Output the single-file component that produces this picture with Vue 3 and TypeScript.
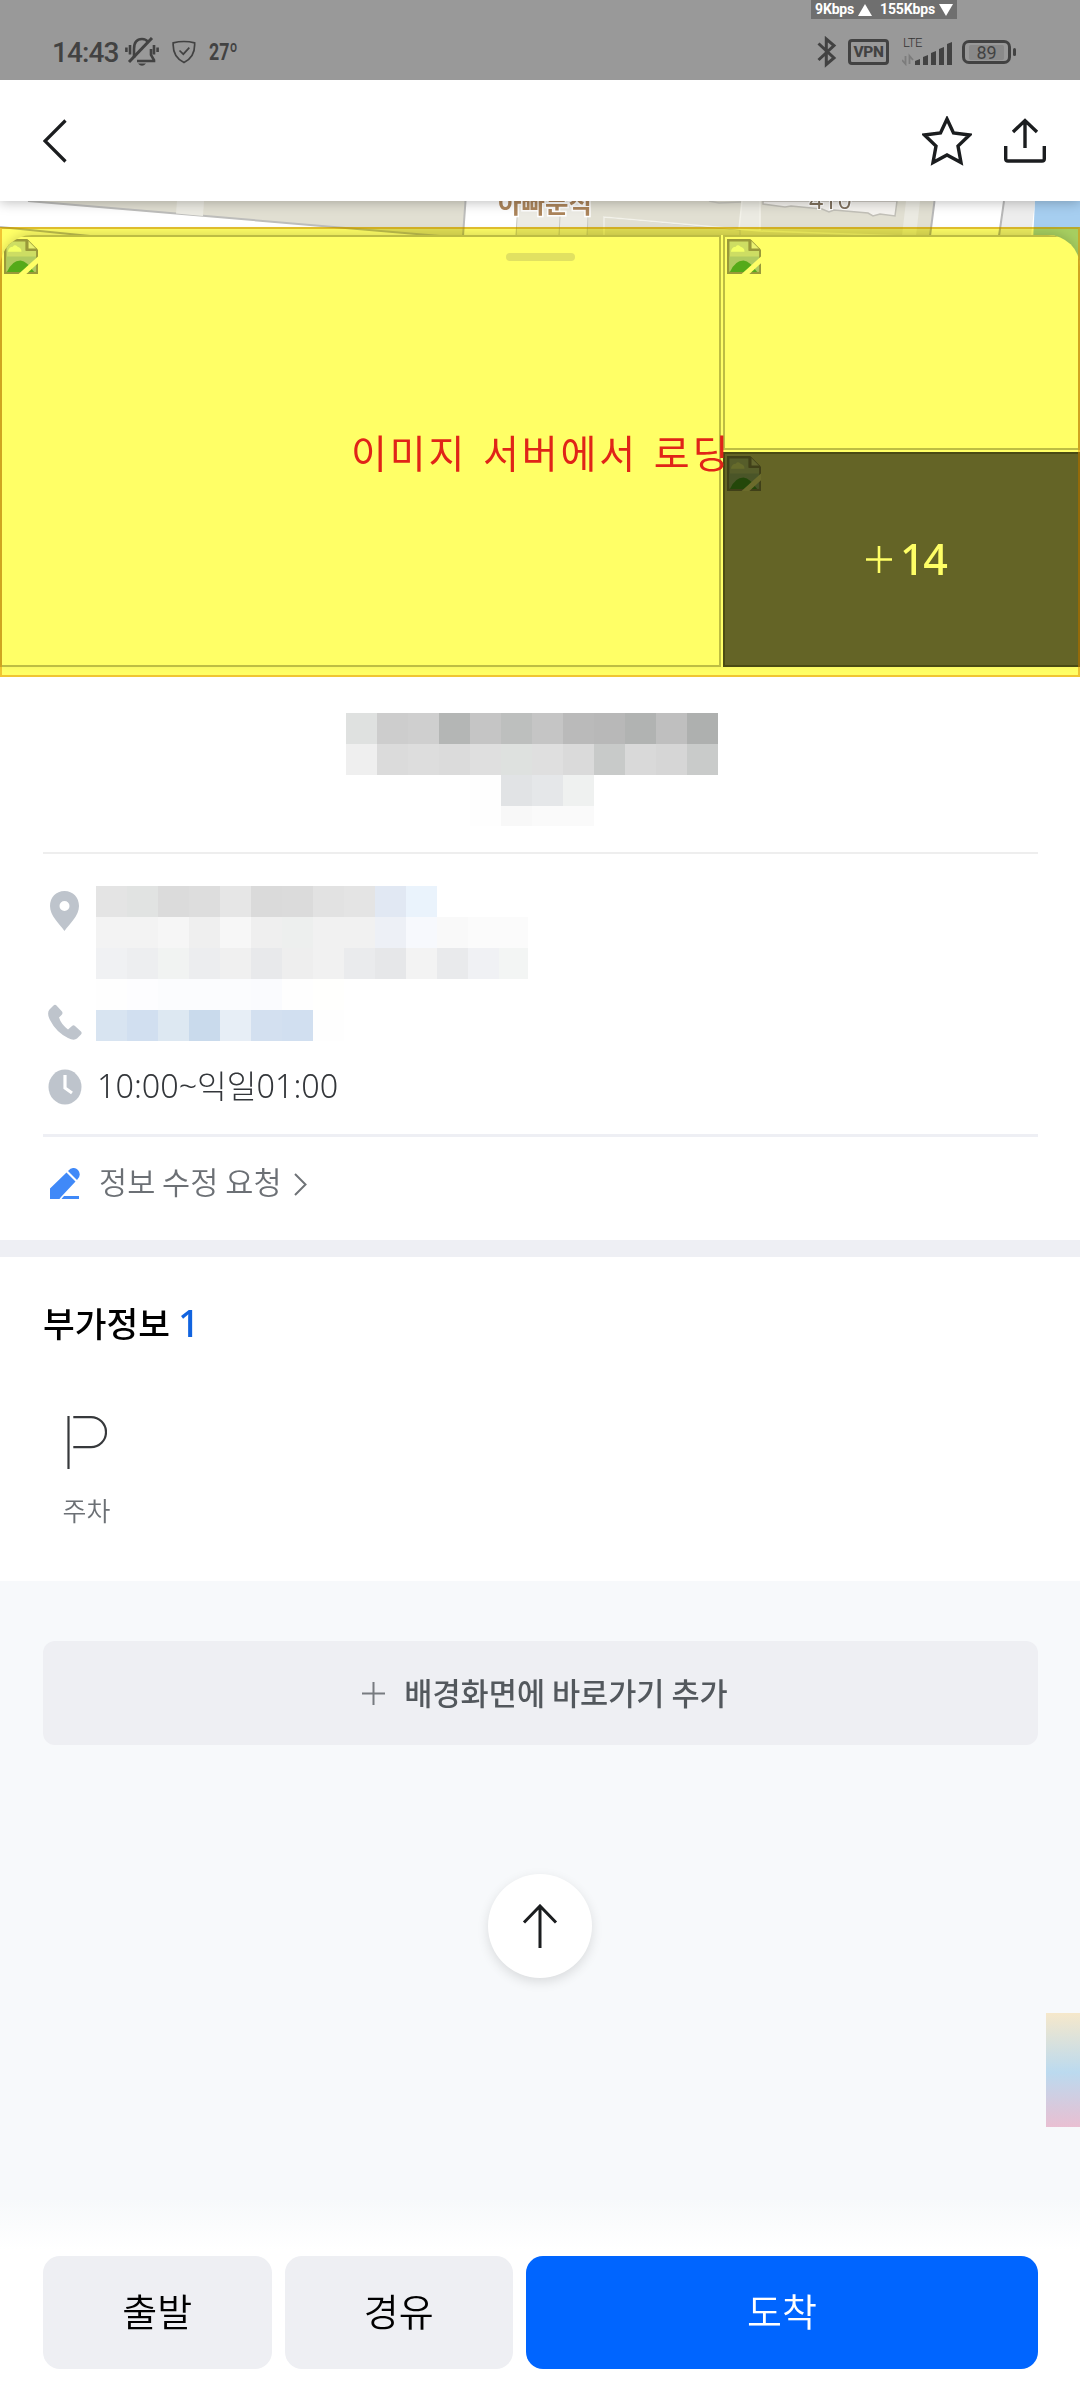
<script setup lang="ts">
interface MosaicRow { height: number; cells: string[] }

const titleMosaic: MosaicRow[] = [
  { height: 31, cells: ['#dfe1e0', '#cdcdcd', '#cfcfcf', '#b4b6b5', '#c5c5c5', '#bdbfbe', '#c5c5c5', '#bababa', '#b8b8b8', '#b1b3b2', '#bfbfbf', '#aeb0af'] },
  { height: 31, cells: ['#efefef', '#dbdbdb', '#dddddd', '#dbdbdb', '#dfdfdf', '#dee1df', '#dfdfdf', '#dadada', '#c8cac9', '#d9d9d9', '#d6d6d6', '#c9cbca'] },
  { height: 31, cells: ['#fff', '#fff', '#fff', '#fff', '#fefefe', '#e1e3e5', '#e5e7e9', '#eff1f0', '#fff', '#fff', '#fff', '#fff'] },
  { height: 20, cells: ['#fff', '#fff', '#fff', '#fff', '#fefefe', '#f8f8f8', '#fafafa', '#fafafa', '#fff', '#fff', '#fff', '#fff'] },
]

const infoMosaic: MosaicRow[] = [
  { height: 31, cells: ['#e4e4e4', '#e1e3e2', '#dbdbdb', '#dddddd', '#e6e6e6', '#dadada', '#dbdbdb', '#e2e2e2', '#e4e4e4', '#e1e8f3', '#eaf3fc', '#fff', '#fff', '#fff'] },
  { height: 31, cells: ['#f3f3f3', '#f3f3f3', '#f6f6f6', '#efefef', '#f7f7f7', '#efefef', '#edefee', '#f1f1f1', '#f1f1f1', '#edf0f6', '#f7f9fd', '#f9f9f9', '#fbfbfb', '#fbfbfb'] },
  { height: 31, cells: ['#f0f1f3', '#edeef0', '#f1f3f2', '#ecedef', '#f0f0f0', '#e8e9eb', '#eeeeee', '#f1f1f1', '#eaebed', '#e6e7e9', '#f3f3f3', '#e9eaec', '#f0f1f4', '#f3f5f4'] },
  { height: 31, cells: ['#fefefe', '#fdfdff', '#fbfcfe', '#fbfcfe', '#fbfcfe', '#fafbfe', '#fefefe', '#fffffd', '#fff', '#fff', '#fff', '#fff', '#fff', '#fff'] },
  { height: 31, cells: ['#d8e4f1', '#d1dff0', '#dde8f2', '#c9daec', '#e7eef6', '#d3e0f0', '#d1dff0', '#fefefe', '#fff', '#fff', '#fff', '#fff', '#fff', '#fff'] },
]

const bars = [
  { x: 0, h: 6 }, { x: 8, h: 10 }, { x: 16, h: 14 }, { x: 24, h: 18 }, { x: 32, h: 23 },
]
</script>

<template>
  <div class="screen">
    <div class="status">
      <span class="clock">14:43</span>
      <svg class="bell" width="34" height="30" viewBox="0 0 34 30" fill="none" stroke="#424242" stroke-width="2.6">
        <path d="M9 21V12Q9 2 17 2Q21 2 23 5M26 12V18L29 23V24H12M1.4 10.500V15M5 8V17.500M29 8V17.500M32.600 10.500V15" />
        <path d="M4 25L27 1" stroke-width="3" />
        <path d="M13 26.600H21Q17 31 13 26.600Z" fill="#424242" stroke="none" />
      </svg>
      <svg class="shield" width="24" height="24" viewBox="0 0 24 24" fill="none" stroke="#424242" stroke-width="1.7">
        <path d="M1.200 2.800Q12 .2 22.600 2.800Q23.500 17 12 22.500Q.3 17 1.200 2.800Z" />
        <path d="M7.500 10.500L11.300 14.200L17.300 7.700" />
      </svg>
      <span class="temp">27º</span>
      <div class="status-right">
        <svg width="20" height="32" viewBox="0 0 20 32" fill="none" stroke="#424242" stroke-width="3">
          <path d="M1.500 7.500L17 22L9.300 28.500V3L17 9.500L1.500 24" />
        </svg>
        <span class="vpn">VPN</span>
        <div class="signal">
          <span class="lte">LTE</span>
          <svg width="50" height="28" viewBox="0 0 50 28">
            <path d="M3.500 18V26L0 22M7.500 26V18L11 22" fill="none" stroke="#7c7c7c" stroke-width="1.800" />
            <path v-for="b in bars" :key="b.x" :d="`M${b.x + 13} ${27 - b.h + 2}L${b.x + 18} ${27 - b.h}V27H${b.x + 13}Z`" fill="#424242" />
          </svg>
        </div>
        <div class="battery"><span>89</span></div>
      </div>
      <div class="netspeed">
        <span>9Kbps</span>
        <svg width="14" height="12" viewBox="0 0 14 12"><path d="M7 0L14 12H0Z" fill="#fff" /></svg>
        <span class="down">155Kbps</span>
        <svg width="14" height="12" viewBox="0 0 14 12"><path d="M7 12L14 0H0Z" fill="#fff" /></svg>
      </div>
    </div>

    <header class="header">
      <svg width="24" height="44" viewBox="0 0 24 44" fill="none" stroke="#1b1d1f" stroke-width="3.200"><path d="M22.500 1.500L2 22L22.500 42.500" /></svg>
      <div class="header-actions">
        <svg width="50" height="50" viewBox="0 0 50 50" fill="none" stroke="#1b1d1f" stroke-width="3.400">
          <path d="M25 3L31.500 17L47.500 19L36 30L39 46.500L25 39L11 46.500L14 30L2.500 19L18.500 17Z" />
        </svg>
        <svg width="42" height="45" viewBox="0 0 42 45" fill="none" stroke="#1b1d1f" stroke-width="3.400">
          <path d="M21 30V2.500M9 14L21 2.500L33 14M1.700 28V41Q1.700 43 4 43H38Q40.300 43 40.300 41V28" />
        </svg>
      </div>
    </header>

    <section class="hero">
      <svg class="map" width="1080" height="80" viewBox="0 0 1080 80">
        <rect width="1080" height="80" fill="#fff" />
        <path d="M28 0L440 35H463L465 0Z" fill="#e1dfd2" />
        <path d="M28 0L440 35M465.500 0L463 35M0 26L90 35" fill="none" stroke="#bdbdbb" stroke-width="2" />
        <path d="M177 0L176 12.500L203 15L204 0Z" fill="#ebeae2" />
        <path d="M518 0L516 35H933L937 0Z" fill="#e1dfd2" />
        <path d="M518 0L516 35H587L590 0Z" fill="#ecebe4" />
        <path d="M518 0L516 35M588 15L587 35M604 35V16L740 29V35M560 15L559 35" fill="none" stroke="#c8c8c0" stroke-width="1" />
        <path d="M742 0L739 28L760 30V0Z" fill="#ebeae2" />
        <path d="M604 35V16L738 28L760 30L904 35M742 0L739 28M760 0V30" fill="none" stroke="#f3f2ea" stroke-width="1.500" />
        <path d="M709 0L719 2L741 1" fill="none" stroke="#c8c7bf" stroke-width="1.500" />
        <path d="M763 0V3L785 6L791 5L822 8L829 11L834 9L868 12L873 15L880 13L895 15L897 0Z" fill="#f5f3ef" stroke="#c2c0b8" stroke-width="1.500" />
        <path d="M906 0L902 35H916L920 0Z" fill="#ebeae2" />
        <path d="M934 0L930 35H1000L1004 0Z" fill="#fff" />
        <path d="M1004 0L999 35H1031L1035 0Z" fill="#ededed" />
        <path d="M934.500 0L930 35M1004 0L999 35" stroke="#b8b8b8" stroke-width="2" />
        <path d="M1035 0L1031 80H1080V0Z" fill="#a6cef0" />
        <text class="map-name" x="498" y="12">아빠분식</text>
        <text class="map-number" x="809" y="7.500">410</text>
      </svg>
      <div class="loading">
        <i class="tint"></i>
        <div class="gallery">
          <div v-for="n in 3" :key="n" class="photo" :class="'photo-' + n">
            <svg class="broken" width="34" height="35" viewBox="0 0 35 36">
              <path d="M0 0H24L35 11V36H0Z" fill="#99993a" />
              <path d="M2.500 2.500H22V12H33V33.500H2.500Z" fill="#cddd63" />
              <path d="M2.500 18H33V33.500H2.500Z" fill="#b0cb60" />
              <path d="M4 13Q5 8 9 8Q11 5 14 8Q18 9 18 13Z" fill="#f2ff66" />
              <path d="M3 34Q8 22 17 22Q24 23 31 34Z" fill="#55aa19" />
              <path d="M15 36L35 18V25L23 36Z" fill="#ffff66" />
              <path d="M24 1V11H34" fill="#ebf271" stroke="#99993a" stroke-width="2.500" />
            </svg>
            <div v-if="n === 3" class="more">
              <svg width="26" height="27" viewBox="0 0 26 27" stroke="#ffff66" stroke-width="2.600"><path d="M0 13.500H26M13 0V27" /></svg>
              <span>14</span>
            </div>
          </div>
        </div>
        <i class="handle"></i>
        <p class="notice">이미지 서버에서 로딩</p>
      </div>
    </section>

    <section class="info">
      <div class="title mosaic">
        <div v-for="(row, r) in titleMosaic" :key="r" class="mrow" :style="{ height: row.height + 'px' }">
          <i v-for="(c, k) in row.cells" :key="k" :style="{ background: c }"></i>
        </div>
      </div>
      <hr class="thin" />
      <div class="contact">
        <div class="icons">
          <svg width="29" height="40" viewBox="0 0 29 40"><path fill-rule="evenodd" d="M14.500 0C23 0 29 6.500 29 15C29 25 20 32 14.500 40C9 32 0 25 0 15C0 6.500 6 0 14.500 0ZM14.500 10A5 5 0 1 0 14.500 20A5 5 0 1 0 14.500 10Z" fill="#bec4cc" /></svg>
          <svg class="phone" width="34" height="36" viewBox="0 0 34 36"><path d="M5.500 1.500Q7 0 8.500 1.500L14 7.500Q15 9 14 10.500L11 13.500Q13 20 20 25.500L24 22Q25.500 20.500 27 22L33 27.500Q34.300 29 33 30.500L29 34.500Q26 37 20 34Q8 28 2 16Q-1.500 9 1.500 5.500Z" fill="#bec4cc" /></svg>
        </div>
        <div class="mosaic address">
          <div v-for="(row, r) in infoMosaic" :key="r" class="mrow" :style="{ height: row.height + 'px' }">
            <i v-for="(c, k) in row.cells" :key="k" :style="{ background: c }"></i>
          </div>
        </div>
      </div>
      <div class="hours">
        <svg width="34" height="36" viewBox="0 0 34 36"><ellipse cx="17" cy="18" rx="16.500" ry="17.500" fill="#bec4cc" /><path d="M17 6V19L24 24" fill="none" stroke="#fff" stroke-width="3.200" /></svg>
        <span>10:00~익일01:00</span>
      </div>
      <hr class="thick" />
      <div class="edit">
        <svg width="30" height="31" viewBox="0 0 30 31"><path d="M0 20.500L16.500 4.500L25.500 13.500L11 29L9.500 31H0ZM18 3Q23-2.500 28 2Q32 7 27 12Z" fill="#4089f8" /><path d="M14 28H29V31H11.500Z" fill="#4089f8" /></svg>
        <span>정보 수정 요청</span>
        <svg class="chev" width="13" height="23" viewBox="0 0 13 23" fill="none" stroke="#6f7377" stroke-width="2"><path d="M1 1L11.500 11.500L1 22" /></svg>
      </div>
    </section>

    <section class="extra">
      <h2>부가정보<b>1</b></h2>
      <div class="facility">
        <svg width="40" height="53" viewBox="0 0 40 53" fill="none" stroke="#37393c" stroke-width="2.200"><path d="M1.500 0V53M6.300 1.200H24A15 15 0 0 1 24 31.200H6.300" /></svg>
        <span>주차</span>
      </div>
    </section>

    <section class="tail">
      <div class="shortcut">
        <svg width="23" height="23" viewBox="0 0 23 23" stroke="#777b80" stroke-width="2"><path d="M0 11.500H23M11.500 0V23" /></svg>
        <span>배경화면에 바로가기 추가</span>
      </div>
      <div class="to-top">
        <svg width="36" height="44" viewBox="0 0 36 44" fill="none" stroke="#1b1d1f" stroke-width="3"><path d="M18 44V2M2 18.500L18 2L34 18.500" /></svg>
      </div>
      <i class="edge"></i>
    </section>

    <footer class="actions">
      <div class="btn"><span>출발</span></div>
      <div class="btn"><span>경유</span></div>
      <div class="btn primary"><span>도착</span></div>
    </footer>
  </div>
</template>

<style>
body { margin: 0; background: #fff; }
</style>

<style scoped>
* { box-sizing: border-box; }
svg { display: block; flex: none; }
.screen {
  width: 1080px; height: 2400px; overflow: hidden; position: relative; background: #fff;
  display: flex; flex-direction: column;
  font-family: "Noto Sans CJK KR", "Noto Sans", sans-serif;
}
.status {
  flex: none; height: 80px; background: #999; position: relative; z-index: 4; display: flex; align-items: center;
  padding: 24px 69px 0 52px; font-family: Roboto, sans-serif; color: #424242;
}
.clock { font-size: 28px; font-weight: 500; width: 73px; letter-spacing: -.9px; white-space: nowrap; }
.shield { margin-left: 13px; }
.temp { width: 40px; margin-left: 13px; font-size: 24px; font-weight: 700; transform: scaleX(.74); transform-origin: left; }
.status-right { margin-left: auto; display: flex; align-items: center; }
.vpn {
  width: 41px; height: 26px; margin-left: 11px; border: 3px solid #424242; border-radius: 4px;
  font-size: 15.5px; line-height: 21px; font-weight: 800; text-align: center; letter-spacing: -.4px;
}
.signal { margin-left: 13px; position: relative; }
.lte { position: absolute; left: 1px; top: -3px; font-size: 13px; line-height: 16px; font-weight: 300; color: #333; letter-spacing: -.4px; }
.battery {
  position: relative; width: 49px; height: 24px; margin-left: 10px; border: 3px solid #424242; border-radius: 7px;
  display: flex; align-items: center; justify-content: center; font-size: 18px; line-height: 18px;
}
.battery span { background: #8a8a8a; width: 35px; height: 15px; line-height: 16px; text-align: center; border-radius: 2px; }
.battery::after { content: ""; position: absolute; right: -8px; top: 5px; width: 3px; height: 8px; border-radius: 2px; background: #424242; }
.netspeed {
  position: absolute; left: 811px; top: 0; width: 146px; height: 19px; padding: 0 4px 0; background: #6f6f6f;
  color: #fff; font-size: 14px; line-height: 19px; font-weight: 700; letter-spacing: -.15px; display: flex; align-items: center; justify-content: space-between;
}
.netspeed .down { margin-left: 4px; }
.header {
  flex: none; height: 121px; background: #fff; position: relative; z-index: 3; box-shadow: 0 1px 12px rgba(0, 0, 0, .28);
  display: flex; align-items: center; justify-content: space-between; padding: 0 34px 0 43px;
}
.header-actions { display: flex; align-items: center; gap: 32px; }
.hero { flex: none; height: 476px; position: relative; padding-top: 26px; }
.map { position: absolute; left: 0; top: 0; }
.map-name { font-size: 25.5px; font-weight: 700; fill: #ac855b; stroke: #fff; stroke-width: 3px; paint-order: stroke; }
.map-number { font-family: "Open Sans", sans-serif; font-size: 25px; fill: #80725f; stroke: #fff; stroke-width: 2px; paint-order: stroke; }
.loading { height: 450px; position: relative; padding-top: 8px; }
.tint { position: absolute; inset: 0; background: #ffff66; mix-blend-mode: multiply; }
.loading::after { content: ""; position: absolute; inset: 0; border: 2px solid rgba(225, 140, 0, .5); border-top-color: rgba(200, 140, 0, .55); }
.gallery {
  position: relative; height: 432px; border-radius: 32px 32px 0 0; overflow: hidden; background: #ffff66; box-shadow: 0 -3px 8px rgba(0, 0, 0, .12);
  display: grid; grid-template-columns: 721px 357px; grid-template-rows: 215px 215px; gap: 2px;
}
.photo { border: 2px solid #bdbd43; padding: 2px; position: relative; }
.photo-1 { grid-row: 1 / 3; }
.photo-3 { background: #646426; border-color: #4a4a13; }
.photo-3 .broken { filter: brightness(.42); }
.more {
  position: absolute; inset: 0; display: flex; align-items: center; justify-content: center; gap: 8px;
  font-family: "Noto Sans", sans-serif; font-size: 43px; line-height: 43px; font-weight: 500; color: #ffff66; padding-left: 13px;
}
.more span { width: 50px; letter-spacing: -1.400px; padding-bottom: 3px; }
.handle { position: absolute; left: 506px; top: 26px; width: 69px; height: 8px; border-radius: 4px; background: #e1e161; }
.notice {
  position: absolute; margin: 0; left: 351px; top: 196px; font-size: 39px; line-height: 56px; color: #e02418;
  letter-spacing: 2.9px; word-spacing: 4px; white-space: nowrap; z-index: 2;
}
.info { flex: none; height: 563px; padding: 36px 42px 0 43px; }
.mrow { display: flex; }
.mrow i { flex: none; width: 31px; height: 100%; }
.title { margin-left: 303px; height: 113px; }
hr { border: 0; margin: 0; }
.thin { height: 2px; background: #eee; margin-top: 26px; }
.thick { height: 3px; background: #eeeff4; margin-top: 24px; }
.contact { display: flex; margin-top: 32px; height: 155px; }
.icons { width: 53px; padding: 5px 0 0 7px; }
.phone { margin: 73px 0 0 -2px; }
.address { width: 432px; overflow: hidden; }
.hours { height: 69px; margin-top: 0; padding: 22px 0 0 5px; display: flex; align-items: center; font-family: "Noto Sans", "Noto Sans CJK KR", sans-serif; font-size: 32.300px; line-height: 46px; font-weight: 300; color: #33363a; }
.hours span { margin-left: 15px; padding-bottom: 4px; }
.edit { display: flex; align-items: center; height: 93px; padding: 0 0 0 7px; font-size: 30.600px; font-weight: 350; color: #6c7075; }
.edit span { margin-left: 19px; padding-bottom: 5px; }
.chev { margin-left: 12px; margin-top: 2px; }
.extra { flex: none; height: 341px; border-top: 17px solid #eeeff4; padding: 40px 43px 0; margin-top: 0; }
h2 { margin: 0; height: 50px; font-size: 34.500px; line-height: 50px; font-weight: 500; color: #000; }
h2 b { font-family: "Noto Sans", sans-serif; font-size: 38px; font-weight: 500; color: #1163df; margin-left: 8px; line-height: 1; }
.facility { width: 87px; margin-top: 69px; display: flex; flex-direction: column; align-items: center; font-size: 26px; font-weight: 350; line-height: 38px; color: #6c7075; }
.facility span { margin-top: 22px; }
.tail { flex: 1; background: linear-gradient(#f7f9fb 0, #f7f9fb 619px, #fff 669px); padding: 60px 42px 0 43px; position: relative; }
.shortcut {
  height: 104px; border-radius: 12px; background: #eeeff3; display: flex; align-items: center; justify-content: center; gap: 19px;
  font-size: 30.600px; font-weight: 500; color: #53585d; padding-left: 9px;
}
.shortcut span { padding-bottom: 3px; }
.to-top {
  width: 104px; height: 104px; border-radius: 50%; margin: 129px 0 0 445px; background: #fff; box-shadow: 0 4px 12px rgba(0, 0, 0, .12);
  display: flex; align-items: center; justify-content: center;
}
.edge { position: absolute; right: 0; top: 432px; width: 34px; height: 114px; background: linear-gradient(#f6e8cb, #bbdaef 52%, #e9bfd2); }
.actions { position: absolute; left: 43px; right: 42px; top: 2256px; height: 113px; display: flex; gap: 13px; }
.btn {
  width: 228.500px; border-radius: 17px; background: #eeeff3; display: flex; align-items: center; justify-content: center;
  font-size: 38px; font-weight: 350; color: #000;
}
.btn span { padding-bottom: 7px; }
.primary { flex: 1; background: #0065ff; color: #fff; }
</style>
